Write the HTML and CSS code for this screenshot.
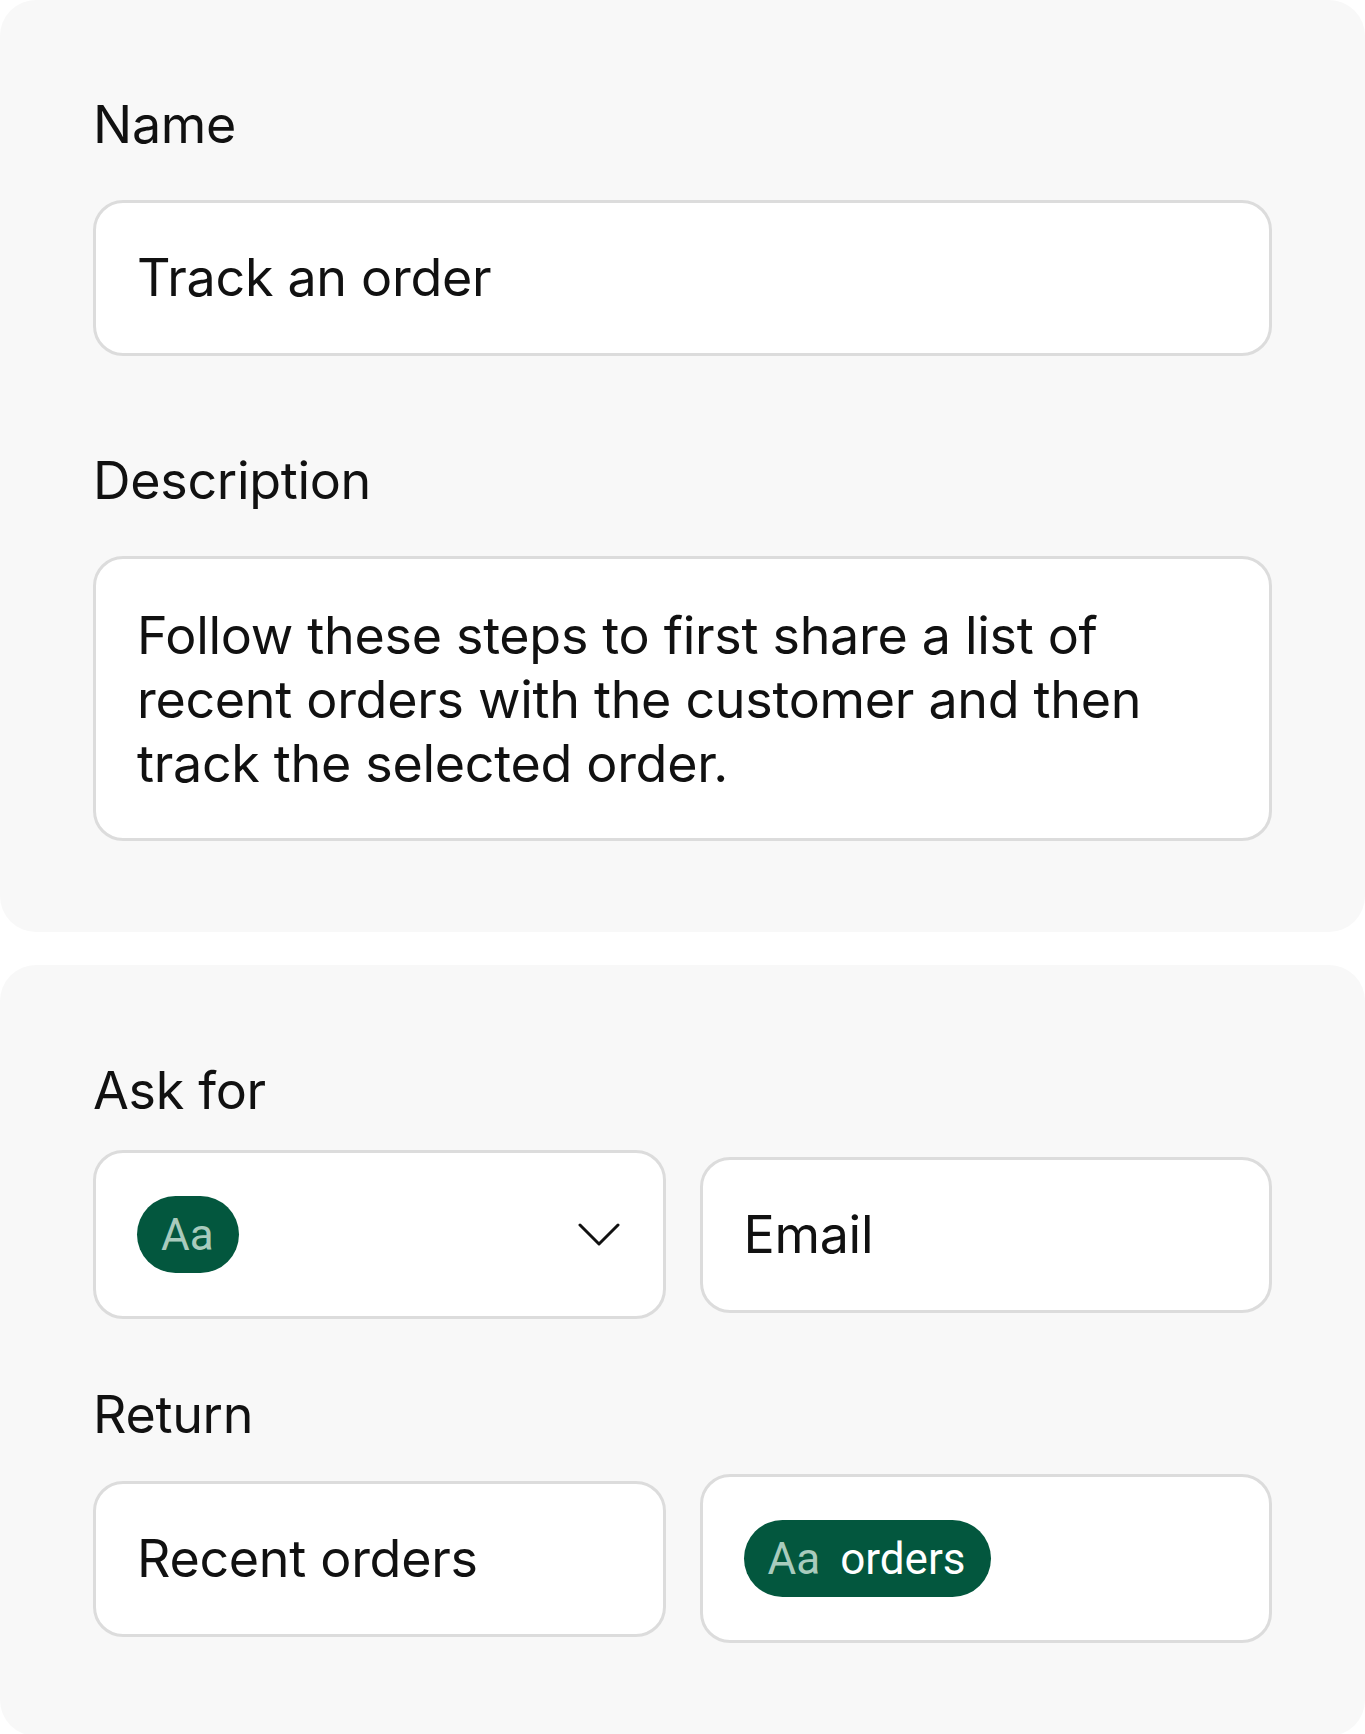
FILE: index.html
```html
<!DOCTYPE html>
<html lang="en">
<head>
    <meta charset="UTF-8">
    <meta name="viewport" content="width=device-width, initial-scale=1.0">
    <title>Track an order</title>
    <link rel="stylesheet" href="styles.css">
</head>
<body>

<div class="card">
    <label class="label" for="name">Name</label>
    <div class="field" id="name">Track an order</div>

    <label class="label label-gap" for="description">Description</label>
    <div class="field field-area" id="description">Follow these steps to first share a list of recent orders with the customer and then track the selected order.</div>
</div>

<div class="card card-second">
    <div class="label">Ask for</div>
    <div class="row">
        <div class="field field-select">
            <span class="pill"><span class="pill-type">Aa</span></span>
            <svg class="chevron" width="42" height="24" viewBox="0 0 42 24">
                <path d="M2 2 L21 21 L40 2" fill="none" stroke="#111" stroke-width="3" stroke-linecap="round" stroke-linejoin="round"/>
            </svg>
        </div>
        <div class="field">Email</div>
    </div>

    <div class="label label-gap-small">Return</div>
    <div class="row">
        <div class="field">Recent orders</div>
        <div class="field field-pill">
            <span class="pill"><span class="pill-type">Aa</span><span class="pill-name">orders</span></span>
        </div>
    </div>
</div>

</body>
</html>
```

FILE: styles.css
```css
body {
    margin: 0;
    padding: 0;
    background-color: #fff;
    font-family: Inter, "Noto Sans", sans-serif;
    color: #111;
}
.card {
    background-color: #f8f8f8;
    border-radius: 36px;
    padding: 93px 93px 91px;
}
.card-second {
    margin-top: 33px;
    padding-top: 94px;
    padding-bottom: 93px;
}
.label {
    display: block;
    font-size: 52px;
    line-height: 64px;
    letter-spacing: -0.3px;
}
.label-gap {
    margin-top: 93px;
}
.label-gap-small {
    margin-top: 64px;
}
.field {
    margin-top: 43px;
    background-color: #fff;
    border: 3px solid #dcdcdc;
    border-radius: 30px;
    padding: 43px 41px;
    font-size: 52px;
    line-height: 64px;
    letter-spacing: -0.3px;
}
.field-area {
    padding: 45px 41px 42px;
}
.row {
    display: grid;
    grid-template-columns: 1fr 1fr;
    gap: 34px;
    align-items: center;
    margin-top: 27px;
}
.row .field {
    margin-top: 0;
}
.field-select {
    display: flex;
    align-items: center;
    justify-content: space-between;
    padding: 43px 43px 43px 41px;
}
.field-pill {
    display: flex;
    align-items: center;
    padding: 43px 41px;
}
.pill {
    display: inline-flex;
    align-items: center;
    gap: 20px;
    height: 77px;
    padding: 0 25px 0 24px;
    border-radius: 39px;
    background-color: #03573e;
    font-family: Roboto, sans-serif;
    font-size: 44px;
    letter-spacing: 0;
}
.pill-type {
    color: #a9cbbd;
}
.pill-name {
    color: #fff;
}
.chevron {
    display: block;
}
```
